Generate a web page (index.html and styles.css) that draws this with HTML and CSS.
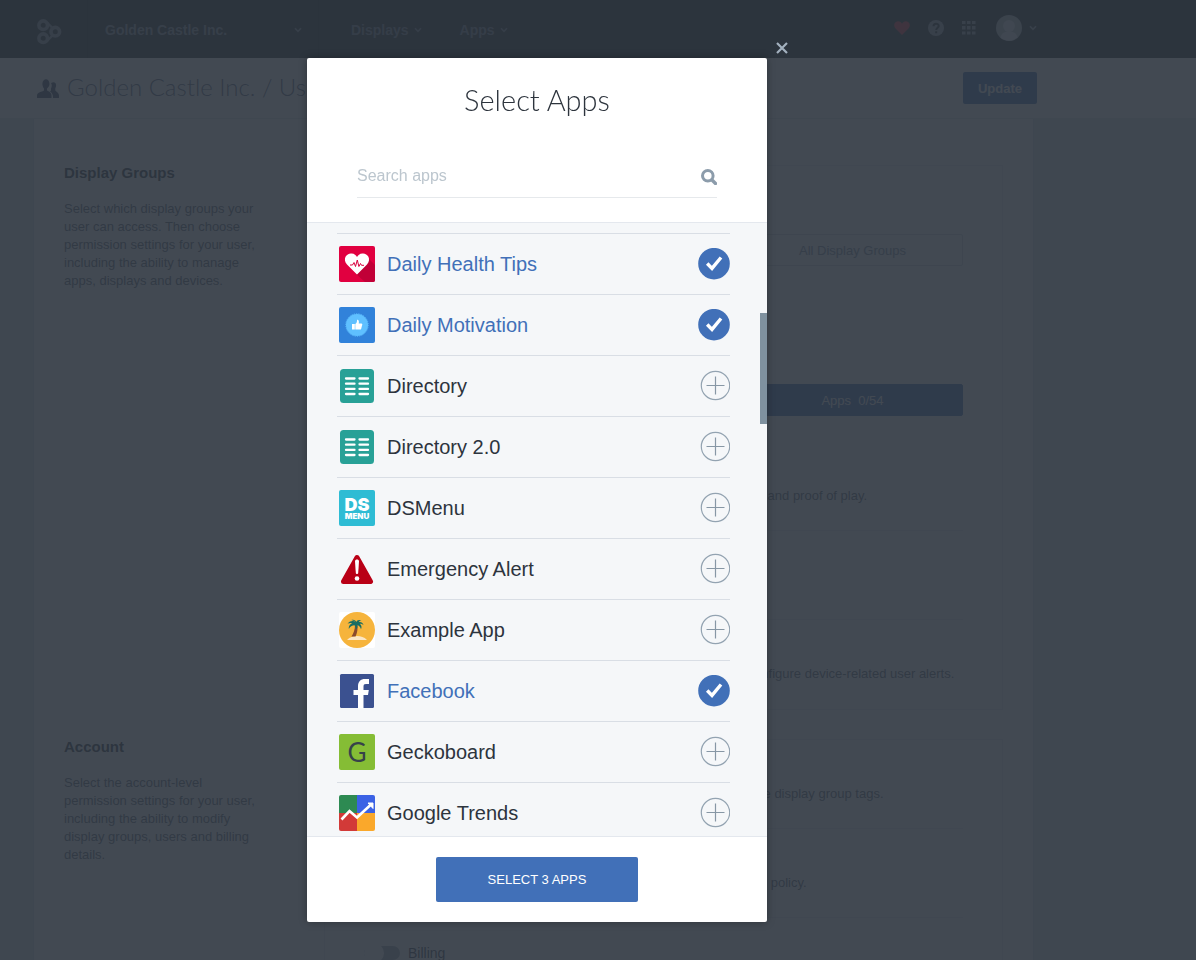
FILE: index.html
```html
<!DOCTYPE html>
<html lang="en">
<head>
    <meta charset="UTF-8">
    <meta name="viewport" content="width=device-width, initial-scale=1.0">
    <title>Select Apps</title>
    <link rel="stylesheet" href="styles.css">
</head>
<body>
    <!-- shared symbols -->
    <svg class="symbols" aria-hidden="true">
        <symbol id="caret" viewBox="0 0 8 6"><path d="M1 1.2 4 4.4 7 1.2" fill="none" stroke="currentColor" stroke-width="1.6"/></symbol>
        <symbol id="check" viewBox="0 0 32 32">
            <circle cx="16" cy="15.7" r="15.8" fill="#4170b8"/>
            <path d="M9.200 15.500 14 20.400 23 9.500" fill="none" stroke="#fff" stroke-width="3.4"/>
        </symbol>
        <symbol id="plus" viewBox="0 0 32 32">
            <circle cx="17.5" cy="15.5" r="14.2" fill="none" stroke="#93a3b1" stroke-width="1.2"/>
            <path d="M17.5 6.5v18M8.5 15.5h18" stroke="#8797a5" stroke-width="1.2"/>
        </symbol>
        <symbol id="directory" viewBox="0 0 36 36">
            <rect x="1" y="1" width="34" height="34" rx="3.5" fill="#28a197"/>
            <path d="M7 10.5h8.500M7 15.7h8.500M7 20.9h8.500M7 26h8.500M20.500 10.5h8.500M20.500 15.7h8.500M20.500 20.9h8.500M20.500 26h8.500" stroke="#fff" stroke-width="2.300" stroke-linecap="round"/>
        </symbol>
    </svg>

    <header class="topbar">
        <div class="topbar-inner">
            <a class="logo" href="#" aria-label="Home">
                <svg width="26" height="26" viewBox="0 0 26 26" fill="none" stroke="currentColor" stroke-width="3.6">
                    <circle cx="6.200" cy="6.200" r="4.300"/><circle cx="6.200" cy="19.200" r="4.300"/><circle cx="18.300" cy="12.700" r="4.300"/>
                    <path d="M10 3.500 15 8.500M10 22 15.500 16.500" stroke-width="2.400"/>
                </svg>
            </a>
            <button class="account" type="button">Golden Castle Inc.<svg width="8" height="6"><use href="#caret"/></svg></button>
            <nav class="menu">
                <a href="#">Displays<svg width="8" height="6"><use href="#caret"/></svg></a>
                <a href="#">Apps<svg width="8" height="6"><use href="#caret"/></svg></a>
            </nav>
            <div class="tools">
                <svg class="heart" width="16" height="14" viewBox="0 0 16 14"><path d="M8 14 1.300 7.300C-1 4.500.4.500 4 .3 6 .3 7.300 1.400 8 2.700 8.700 1.400 10 .3 12 .3c3.600.2 5 4.200 2.700 7z" fill="currentColor"/></svg>
                <svg width="16" height="16" viewBox="0 0 16 16"><circle cx="8" cy="8" r="8" fill="currentColor"/><path d="M5.500 6.300C5.500 3 10.700 3 10.700 6c0 1.700-2.500 1.700-2.500 4M8.200 11.200v2" fill="none" stroke="#242b2d" stroke-width="2"/></svg>
                <svg width="14" height="14" viewBox="0 0 14 14" fill="currentColor"><path d="M0 0h3.500v3H0zM5 0h3.500v3H5zM10 0h3.500v3H10zM0 5h3.500v3.500H0zM5 5h3.500v3.500H5zM10 5h3.500v3.500H10zM0 10.500h3.500v3H0zM5 10.500h3.500v3H5zM10 10.500h3.500v3H10z"/></svg>
                <button class="user" type="button" aria-label="User menu">
                    <svg width="26" height="26" viewBox="0 0 26 26"><circle cx="13" cy="13" r="13" fill="#b4bcc4"/><circle cx="13" cy="11" r="6" fill="#e6eaee"/><path d="M4.500 22.500c1-4.500 4-6 8.500-6s7.500 1.500 8.500 6a13 13 0 0 1-17 0z" fill="#e6eaee"/></svg>
                    <svg width="8" height="6"><use href="#caret"/></svg>
                </button>
            </div>
        </div>
    </header>

    <div class="titlebar">
        <div class="titlebar-inner">
            <svg width="22" height="19" viewBox="0 0 22 19" fill="#3c4c69"><path d="M12.500 5c0-7-8-6-7 1 .3 2 1 3 1.500 3.500v2C5 13 0 13 0 16.500V19h14.500v-2.500c0-3.500-3-4-4.500-5v-2c.5-.5 2.500-2 2.500-4.500zM14 4c4-2.500 6.500 1 4.300 5.500v2C20 13.500 22 14 22 16.500V19h-6c.3-4-1.500-5.500-3-6.500l1-1V9.500c1-2 1-4 0-5.500z"/></svg>
            <h1>Golden Castle Inc. / Users</h1>
            <button class="btn" type="button">Update</button>
        </div>
    </div>

    <div class="page">
        <main class="panel">
            <section class="group">
                <div class="intro">
                    <h2>Display Groups</h2>
                    <p>Select which display groups your user can access. Then choose permission settings for your user, including the ability to manage apps, displays and devices.</p>
                </div>
                <div class="card">
                    <div class="card-head">
                        <button class="tab" type="button">All Display Groups</button>
                    </div>
                    <div class="card-tabs">
                        <button class="tab tab-active" type="button">Apps&nbsp; 0/54</button>
                    </div>
                    <div class="perm">
                        <label><input type="checkbox">Reports</label>
                        <p>Permission to view and export reports of player activity, usage and proof of play.</p>
                    </div>
                    <div class="perm">
                        <label><input type="checkbox">Displays</label>
                        <p>Permission to add and edit displays.</p>
                    </div>
                    <div class="perm">
                        <label><input type="checkbox">Alerts</label>
                        <p>Permission to manage devices in their display groups, and configure device-related user alerts.</p>
                    </div>
                </div>
            </section>
            <section class="group">
                <div class="intro">
                    <h2>Account</h2>
                    <p>Select the account-level permission settings for your user, including the ability to modify display groups, users and billing details.</p>
                </div>
                <div class="card">
                    <div class="perm">
                        <label><input type="checkbox">Groups</label>
                        <p>Permission to create and edit all display groups and to manage display group tags.</p>
                    </div>
                    <div class="perm">
                        <label><input type="checkbox">Users</label>
                        <p>Permission to manage users, and configure account password policy.</p>
                    </div>
                    <div class="perm">
                        <label><input type="checkbox">Billing</label>
                    </div>
                </div>
            </section>
        </main>
    </div>

    <div class="overlay">
        <div class="modal" role="dialog" aria-labelledby="modal-title">
            <button class="close" type="button" aria-label="Close">
                <svg width="12" height="12" viewBox="0 0 12 12"><path d="M1 1 11 11M11 1 1 11" stroke="#a3b1bf" stroke-width="2.200"/></svg>
            </button>
            <div class="modal-head">
                <h2 id="modal-title">Select Apps</h2>
                <div class="search">
                    <input type="text" placeholder="Search apps" aria-label="Search apps">
                    <svg width="16" height="16" viewBox="0 0 16 16" fill="none" stroke="#8c9cab"><circle cx="6.800" cy="6.800" r="5.300" stroke-width="3"/><path d="m11 11 3.500 3.500" stroke-width="3.400" stroke-linecap="round"/></svg>
                </div>
            </div>
            <div class="list-wrap">
                <div class="app-list">
                    <label class="app">
                        <svg width="36" height="36" viewBox="0 0 36 36">
                            <rect width="36" height="36" rx="2" fill="#e10040"/>
                            <path d="M29 12 36 19v15a2 2 0 0 1-2 2H26L17 28z" fill="#c10037"/>
                            <path d="M18 28.500 8 18.500C3 12.500 8 7 12.500 7.500c3 0 4.500 2 5.500 3.500 1-1.500 2.500-3.500 5.500-3.500C28 7 33 12.500 28 18.500z" fill="#fff"/>
                            <path d="M11 19h2.500l1.500-2.500 1.500 4 1.800-6.500 1.600 6.500 1.600-3 1 1.800H25" fill="none" stroke="#d9003d"/>
                        </svg>
                        <span class="app-name">Daily Health Tips</span>
                        <span class="tick"><input type="checkbox" checked><svg class="on"><use href="#check"/></svg><svg class="off"><use href="#plus"/></svg></span>
                    </label>
                    <label class="app">
                        <svg width="36" height="36" viewBox="0 0 36 36">
                            <rect width="36" height="36" rx="2" fill="#3182da"/>
                            <circle cx="18" cy="18" r="11" fill="#5fc0ff"/><circle cx="18" cy="18" r="11.200" fill="none" stroke="#5fc0ff" stroke-dasharray="1.200 1.140"/>
                            <path d="M13 17h2.800v5.600H13zM16.300 17c1.500-1 1.800-2.500 1.700-4.300 1.600-.2 2.300 1.300 1.700 3.700h2.600c1.200.1 1.200 1.400.7 2.200l-.8 3.200c-.2.600-.6.800-1.200.8h-4.700z" fill="#fff"/>
                        </svg>
                        <span class="app-name">Daily Motivation</span>
                        <span class="tick"><input type="checkbox" checked><svg class="on"><use href="#check"/></svg><svg class="off"><use href="#plus"/></svg></span>
                    </label>
                    <label class="app">
                        <svg width="36" height="36"><use href="#directory"/></svg>
                        <span class="app-name">Directory</span>
                        <span class="tick"><input type="checkbox"><svg class="on"><use href="#check"/></svg><svg class="off"><use href="#plus"/></svg></span>
                    </label>
                    <label class="app">
                        <svg width="36" height="36"><use href="#directory"/></svg>
                        <span class="app-name">Directory 2.0</span>
                        <span class="tick"><input type="checkbox"><svg class="on"><use href="#check"/></svg><svg class="off"><use href="#plus"/></svg></span>
                    </label>
                    <label class="app">
                        <svg class="ds" width="36" height="36" viewBox="0 0 36 36">
                            <rect width="36" height="36" rx="2" fill="#2ebcd4"/>
                            <text x="18" y="21" font-size="18">DS</text>
                            <text x="18" y="29" font-size="8">MENU</text>
                        </svg>
                        <span class="app-name">DSMenu</span>
                        <span class="tick"><input type="checkbox"><svg class="on"><use href="#check"/></svg><svg class="off"><use href="#plus"/></svg></span>
                    </label>
                    <label class="app">
                        <svg width="36" height="36" viewBox="0 0 36 36">
                            <path d="M18 6.500 31.500 30.500h-27z" fill="#b90016" stroke="#b90016" stroke-width="5" stroke-linejoin="round"/>
                            <path d="M16 10.500c0-2.600 4-2.600 4 0L19.200 22c-.2 1.300-2.200 1.300-2.400 0z" fill="#fff"/><circle cx="18" cy="27.500" r="2.300" fill="#fff"/>
                        </svg>
                        <span class="app-name">Emergency Alert</span>
                        <span class="tick"><input type="checkbox"><svg class="on"><use href="#check"/></svg><svg class="off"><use href="#plus"/></svg></span>
                    </label>
                    <label class="app">
                        <svg width="36" height="36" viewBox="0 0 36 36">
                            <rect width="36" height="36" rx="2" fill="#fff"/><circle cx="18" cy="18" r="18" fill="#f6b43c"/>
                            <path d="M8 28c3-3 6-4 10-4s7 1 10 4z" fill="#fbe6c4"/>
                            <path d="M12.500 24.500c2-3 3.500-7 3.500-11.500l2.500-.5c.5 4.500-.5 9-2 12z" fill="#8a4a2c"/>
                            <path d="M17 11c-2-2.800-5.500-2.500-8.500.5 2-.7 3.500-.7 4.500-.3-2.200 1-3.500 3-3.200 5.800 1.500-2.500 3.200-3.700 5.700-3.700 1.200 1.200 1.500 2.500 1 4.500 2-1.500 2.300-3 1.500-4.500 2 0 3.500 1.800 4 4 1-2 .5-4.200-1.200-5.500 1.500-.2 2.700.3 3.700 1.500-.3-2.500-2.300-3.800-4.700-3.300.5-.8 1.500-1.300 2.700-1.200-2-1.600-4.500-1-5.200 1.200-.7-1.800-2.500-2.800-5-2 2 .6 3.700 1.200 4.700 3z" fill="#176d63"/>
                        </svg>
                        <span class="app-name">Example App</span>
                        <span class="tick"><input type="checkbox"><svg class="on"><use href="#check"/></svg><svg class="off"><use href="#plus"/></svg></span>
                    </label>
                    <label class="app">
                        <svg width="36" height="36" viewBox="0 0 36 36">
                            <rect x="1" y="1" width="34" height="34" rx="1.500" fill="#3b5190"/>
                            <path d="M19 35.500V22h-4.500v-5H19v-3.500c0-5 2.500-7.500 7-7.500h4v5h-3c-2 0-2.500.8-2.500 2.500V17h5.300l-.8 5h-4.500v13.500z" fill="#fff"/>
                        </svg>
                        <span class="app-name">Facebook</span>
                        <span class="tick"><input type="checkbox" checked><svg class="on"><use href="#check"/></svg><svg class="off"><use href="#plus"/></svg></span>
                    </label>
                    <label class="app">
                        <svg class="gecko" width="36" height="36" viewBox="0 0 36 36">
                            <rect width="36" height="36" rx="2" fill="#85bd35"/>
                            <text x="18" y="28">G</text>
                        </svg>
                        <span class="app-name">Geckoboard</span>
                        <span class="tick"><input type="checkbox"><svg class="on"><use href="#check"/></svg><svg class="off"><use href="#plus"/></svg></span>
                    </label>
                    <label class="app">
                        <svg class="trends" width="36" height="36" viewBox="0 0 36 36">
                            <path d="M0 0h18v18H0z" fill="#2d8a52"/><path d="M18 0h18v18H18z" fill="#3b62e5"/><path d="M0 18h18v18H0z" fill="#d23a38"/><path d="M18 18h18v18H18z" fill="#faa82b"/>
                            <path d="M2.500 24.500 10.500 16 18 22.500 31.500 10" fill="none" stroke="#fff" stroke-width="2.600"/><path d="M29 8h5v5.500z" fill="#fff" stroke="#fff"/>
                        </svg>
                        <span class="app-name">Google Trends</span>
                        <span class="tick"><input type="checkbox"><svg class="on"><use href="#check"/></svg><svg class="off"><use href="#plus"/></svg></span>
                    </label>
                </div>
                <div class="scroll-thumb"></div>
            </div>
            <div class="modal-foot">
                <button class="btn btn-select" type="button">SELECT 3 APPS</button>
            </div>
        </div>
    </div>
</body>
</html>
```
FILE: styles.css
```css
* {
    box-sizing: border-box;
}

body {
    margin: 0;
    height: 100vh;
    overflow: hidden;
    font-family: "Liberation Sans", Arial, sans-serif;
    font-size: 13px;
    line-height: 18px;
    color: #5b6575;
    background-color: #e2e8ec;
}

h1, h2, p {
    margin: 0;
}

button {
    font-family: inherit;
    font-size: 13px;
    border: none;
    padding: 0;
    background: none;
    cursor: pointer;
}

svg {
    display: block;
    flex: none;
}

.symbols {
    position: absolute;
    width: 0;
    height: 0;
}

/* top navigation */
.topbar {
    background-color: #242b2d;
    padding-right: 122px;
}

.topbar-inner {
    display: flex;
    align-items: center;
    max-width: 1000px;
    height: 58px;
    margin: 0 auto;
    color: #a0a8b4;
}

.logo {
    display: flex;
    align-items: center;
    width: 50px;
    height: 58px;
    padding-top: 6px;
    color: #8c96a3;
}

.account {
    display: flex;
    align-items: center;
    justify-content: space-between;
    width: 232px;
    height: 58px;
    padding: 4px 16px 2px 17px;
    border-left: 1px solid #1a2023;
    border-right: 1px solid #1a2023;
    font-size: 14px;
    font-weight: bold;
    color: #8c96a3;
}

.menu {
    display: flex;
    gap: 38px;
    margin-left: 32px;
    padding-top: 2px;
}

.menu a {
    display: flex;
    align-items: center;
    gap: 5px;
    font-size: 14px;
    font-weight: bold;
    color: #7c8798;
    text-decoration: none;
}

.tools {
    display: flex;
    align-items: center;
    gap: 18px;
    margin-left: auto;
    padding-bottom: 2px;
    color: #98a2b0;
}

.heart {
    color: #e2303e;
}

.user {
    display: flex;
    align-items: center;
    gap: 7px;
    margin-left: 2px;
    color: inherit;
}

/* page title */
.titlebar {
    background-color: #fff;
    border-bottom: 1px solid #e2e8ec;
    padding-right: 122px;
}

.titlebar-inner {
    display: flex;
    align-items: center;
    gap: 8px;
    max-width: 1000px;
    height: 60px;
    margin: 0 auto;
}

.titlebar h1 {
    padding-bottom: 2px;
    font-family: Lato, "Open Sans", sans-serif;
    font-size: 24px;
    line-height: 30px;
    font-weight: 300;
    color: #5a6580;
}

.btn {
    background-color: #4170b8;
    color: #fff;
    border-radius: 2px;
}

.titlebar .btn {
    width: 74px;
    height: 32px;
    margin-left: auto;
    font-weight: bold;
}

/* page content */
.page {
    padding-right: 129px;
}

.panel {
    display: flex;
    flex-direction: column;
    gap: 29px;
    max-width: 1001px;
    margin: 0 auto;
    padding: 46px 30px 30px;
    background-color: #fff;
    border: 1px solid #d8dfe4;
    border-top: none;
}

.group {
    display: flex;
    gap: 60px;
}

.intro {
    width: 200px;
}

.intro h2 {
    font-size: 15px;
    line-height: 16px;
    margin-bottom: 19px;
    color: #2d343d;
}

.card {
    flex: 1;
    border: 1px solid #e8ecef;
}

.card-head {
    padding: 68px 39px 20px;
    background-color: #f8fafb;
}

.card-tabs {
    padding: 98px 39px 26px;
}

.card-head,
.card-tabs {
    display: flex;
    justify-content: flex-end;
}

.tab {
    width: 221px;
    height: 32px;
    border: 1px solid #d0d8df;
    border-radius: 2px;
    color: #8090a2;
}

.tab-active {
    background-color: #4170b8;
    border-color: #4170b8;
    color: #fff;
}

.perm {
    height: 89px;
    margin: 0 39px;
    padding-top: 26px;
    border-bottom: 1px solid #e8ecef;
}

.perm:last-child {
    border-bottom: none;
}

.perm label {
    display: flex;
    align-items: center;
    gap: 8px;
    font-size: 14px;
    color: #3b4452;
}

.perm input {
    appearance: none;
    width: 36px;
    height: 14px;
    margin: 0;
    border-radius: 7px;
    background-color: #a0abb8;
}

.perm input::before {
    content: "";
    display: block;
    width: 20px;
    height: 20px;
    margin-top: -3px;
    border-radius: 50%;
    background-color: #fff;
}

.perm p {
    margin-top: 1px;
    padding-left: 44px;
    white-space: nowrap;
}

/* modal */
.overlay {
    position: fixed;
    inset: 0;
    padding: 58px 122px 38px 0;
    background-color: rgba(46, 53, 63, 0.9);
}

.modal {
    position: relative;
    display: flex;
    flex-direction: column;
    width: 460px;
    height: 100%;
    margin: 0 auto;
    background-color: #fff;
    border-radius: 2px;
    box-shadow: 0 0 8px rgba(0, 0, 0, 0.3);
}

.close {
    position: absolute;
    top: -16px;
    right: -21px;
}

.modal-head {
    padding: 25px 50px 24px;
    border-bottom: 1px solid #e4e8ee;
}

.modal-head h2 {
    font-family: Lato, "Open Sans", sans-serif;
    font-size: 29px;
    line-height: 34px;
    font-weight: 300;
    text-align: center;
    color: #2d343d;
}

.search {
    display: flex;
    align-items: center;
    height: 41px;
    margin-top: 40px;
    border-bottom: 1px solid #e6e9ec;
}

.search input {
    flex: 1;
    min-width: 0;
    padding: 0 0 2px;
    border: none;
    outline: none;
    font-family: inherit;
    font-size: 16px;
}

.search input::placeholder {
    color: #bcc6ce;
}

.list-wrap {
    position: relative;
    flex: 1;
    min-height: 0;
    background-color: #f5f7f9;
}

.app-list {
    height: 100%;
    padding: 10px 37px 0 30px;
    overflow: hidden;
}

.app {
    display: flex;
    align-items: center;
    gap: 12px;
    height: 61px;
    padding-left: 2px;
    border-top: 1px solid #d9dee5;
    cursor: pointer;
}

.app-name {
    flex: 1;
    font-size: 20px;
    line-height: 24px;
    color: #2d343d;
}

.app:has(input:checked) .app-name {
    color: #4170b8;
}

/* the checkbox and both of its icons share one grid cell */
.tick {
    display: grid;
}

.tick > * {
    grid-area: 1 / 1;
    width: 32px;
    height: 32px;
    margin: 0;
}

.tick input {
    opacity: 0;
}

.tick .on,
.tick input:checked ~ .off {
    display: none;
}

.tick input:checked ~ .on {
    display: block;
}

.ds text {
    font-family: Inter, sans-serif;
    font-weight: 900;
    fill: #fff;
    text-anchor: middle;
}

.gecko text {
    font-family: Lato, sans-serif;
    font-size: 26px;
    fill: #36424a;
    text-anchor: middle;
}

.trends {
    border-radius: 2px;
}

.scroll-thumb {
    position: absolute;
    top: 90px;
    right: 0;
    width: 7px;
    height: 111px;
    background-color: #7f919f;
}

.modal-foot {
    padding: 20px;
    border-top: 1px solid #e4e8ee;
    text-align: center;
}

.btn-select {
    width: 202px;
    height: 45px;
}
```
